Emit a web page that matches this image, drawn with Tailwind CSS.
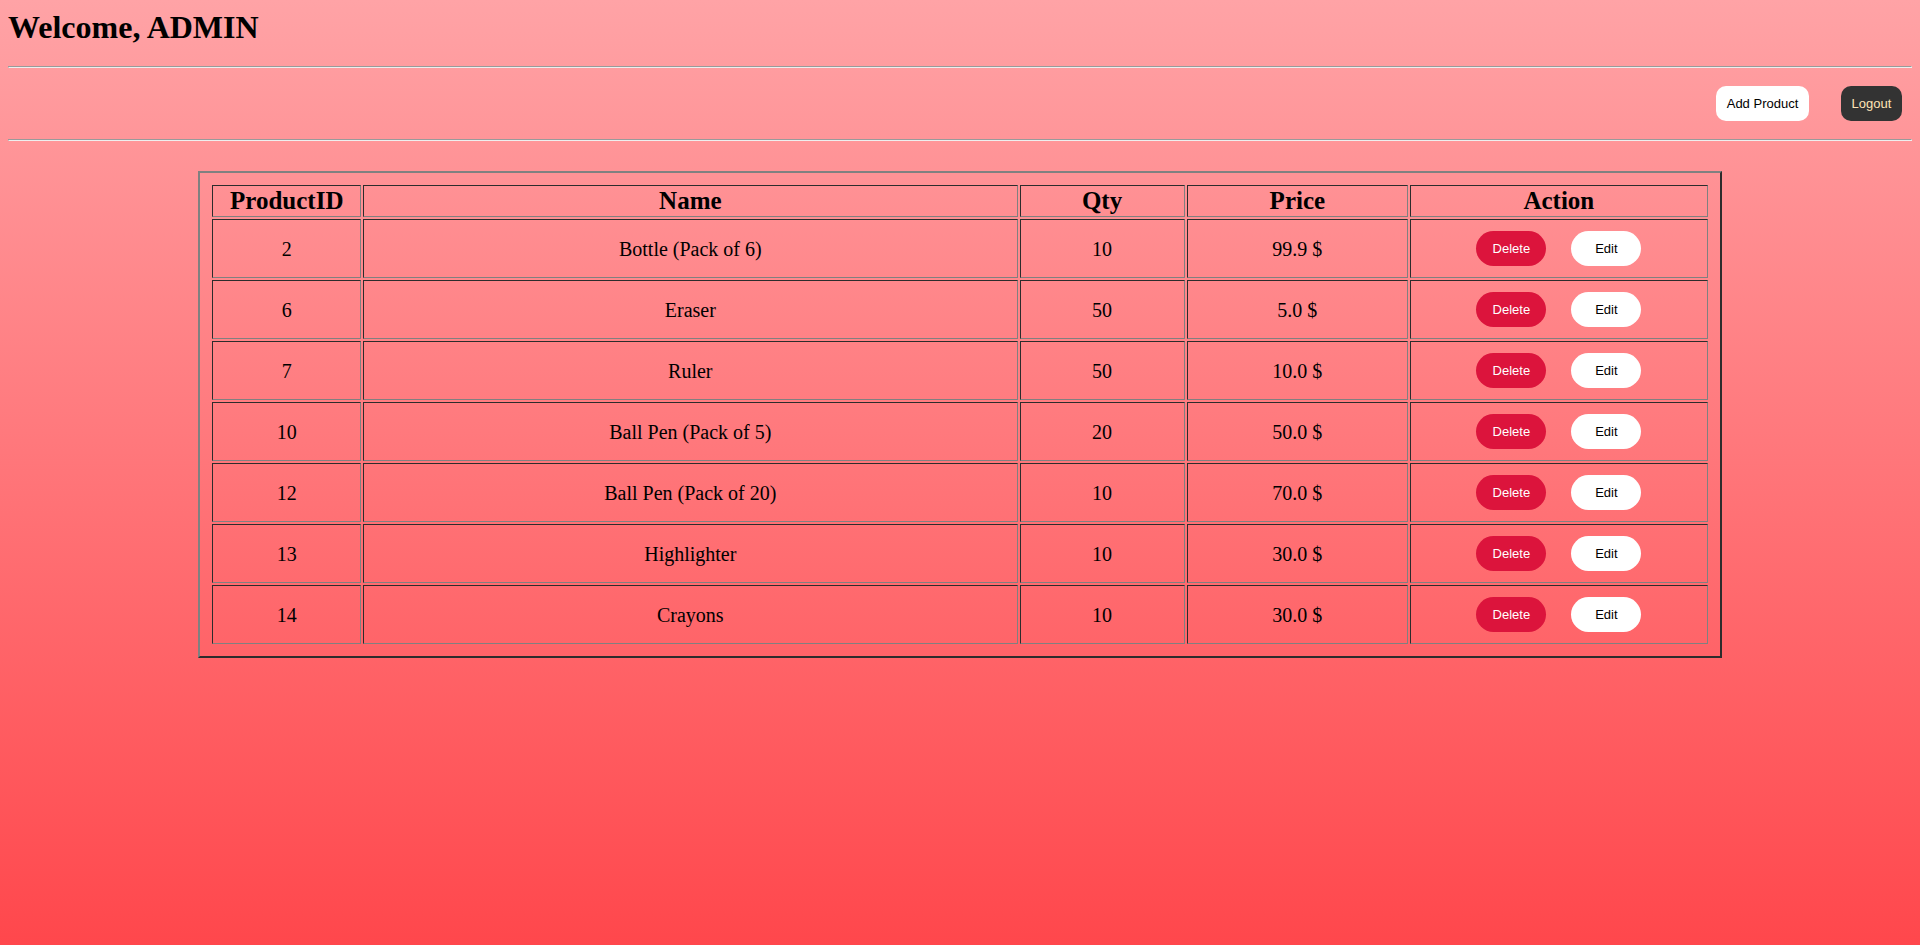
<!DOCTYPE html>
<html lang="en">
<head>
<meta charset="utf-8">
<meta name="viewport" content="width=device-width, initial-scale=1">
<title>Admin</title>
<script src="https://cdn.jsdelivr.net/npm/@tailwindcss/browser@4"></script>
</head>
<body class="min-h-screen bg-[linear-gradient(#ffa3a6,#ff474c)] p-2 font-['Liberation_Serif',serif] text-black">
<header>
  <h1 class="text-[32px] leading-[38px] font-bold">Welcome, ADMIN</h1>
  <hr class="mt-5 h-[2px] border border-t-[#9a9a9a] border-r-[#eeeeee] border-b-[#eeeeee] border-l-[#9a9a9a]">
  <nav class="flex justify-end gap-8 py-[18px] pr-[10px] font-['Liberation_Sans',sans-serif] text-[13px] leading-[15px]">
    <button type="button" class="h-[35px] w-[93px] rounded-[10px] bg-white">Add Product</button>
    <button type="button" class="h-[35px] w-[61px] rounded-[10px] bg-[#333333] text-[#ffe4b5]">Logout</button>
  </nav>
  <hr class="h-[2px] border border-t-[#9a9a9a] border-r-[#eeeeee] border-b-[#eeeeee] border-l-[#9a9a9a]">
</header>
<main class="pt-[30px]">
  <div class="mx-auto w-4/5 border-2 border-t-[#808080] border-r-[#2c2c2c] border-b-[#2c2c2c] border-l-[#808080] p-[10px]">
    <table class="w-full table-fixed border-separate border-spacing-[2px] text-center text-[20px] leading-6 [&_td]:h-[59px] [&_td]:border [&_td]:border-t-[#2c2c2c] [&_td]:border-r-[#808080] [&_td]:border-b-[#808080] [&_td]:border-l-[#2c2c2c] [&_th]:h-[32px] [&_th]:border [&_th]:border-t-[#2c2c2c] [&_th]:border-r-[#808080] [&_th]:border-b-[#808080] [&_th]:border-l-[#2c2c2c]">
      <colgroup>
        <col class="w-[10%]">
        <col>
        <col class="w-[11.1%]">
        <col class="w-[14.9%]">
        <col class="w-[20%]">
      </colgroup>
      <thead class="text-[25px] leading-[28px]">
        <tr><th scope="col">ProductID</th><th scope="col">Name</th><th scope="col">Qty</th><th scope="col">Price</th><th scope="col">Action</th></tr>
      </thead>
      <tbody id="products"></tbody>
    </table>
  </div>
</main>
<template id="row">
  <tr>
    <td></td><td></td><td></td><td></td>
    <td>
      <div class="flex justify-center gap-[25px] font-['Liberation_Sans',sans-serif] text-[13px] leading-[15px]">
        <button type="button" class="h-[35px] w-[70px] rounded-[20px] bg-[#dc143c] text-white">Delete</button>
        <button type="button" class="h-[35px] w-[70px] rounded-[20px] bg-white">Edit</button>
      </div>
    </td>
  </tr>
</template>
<script>
const products = [
  ["2", "Bottle (Pack of 6)", "10", "99.9 $"],
  ["6", "Eraser", "50", "5.0 $"],
  ["7", "Ruler", "50", "10.0 $"],
  ["10", "Ball Pen (Pack of 5)", "20", "50.0 $"],
  ["12", "Ball Pen (Pack of 20)", "10", "70.0 $"],
  ["13", "Highlighter", "10", "30.0 $"],
  ["14", "Crayons", "10", "30.0 $"]
];
const body = document.getElementById("products");
const template = document.getElementById("row");
for (const product of products) {
  const row = template.content.cloneNode(true);
  const cells = row.querySelectorAll("td");
  product.forEach((value, i) => { cells[i].textContent = value; });
  body.appendChild(row);
}
</script>
</body>
</html>
